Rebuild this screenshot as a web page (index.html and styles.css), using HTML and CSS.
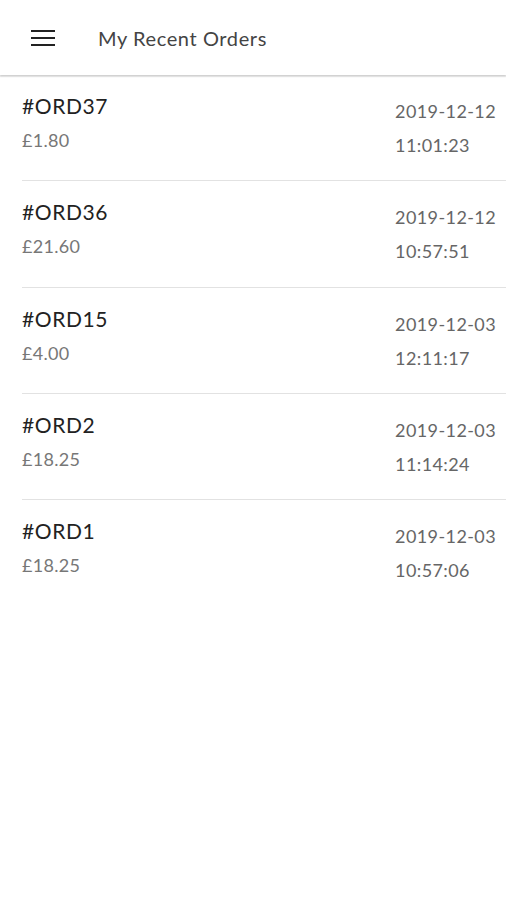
FILE: index.html
```html
<!DOCTYPE html>
<html>
<head>
<meta charset="utf-8">
<link rel="stylesheet" href="styles.css">
</head>
<body>
<header class="toolbar">
  <button class="menu" aria-label="menu">
    <svg width="24" height="16" viewBox="0 0 24 16"><path d="M0 1H24M0 8H24M0 15H24" stroke="#222" stroke-width="2.2"/></svg>
  </button>
  <h1 class="title">My Recent Orders</h1>
</header>
<ul class="list">
  <li class="item"><div class="inner"><div class="info"><div class="code">#ORD37</div><div class="price">£1.80</div></div><div class="when"><div>2019-12-12</div><div>11:01:23</div></div></div></li>
  <li class="item"><div class="inner"><div class="info"><div class="code">#ORD36</div><div class="price">£21.60</div></div><div class="when"><div>2019-12-12</div><div>10:57:51</div></div></div></li>
  <li class="item"><div class="inner"><div class="info"><div class="code">#ORD15</div><div class="price">£4.00</div></div><div class="when"><div>2019-12-03</div><div>12:11:17</div></div></div></li>
  <li class="item"><div class="inner"><div class="info"><div class="code">#ORD2</div><div class="price">£18.25</div></div><div class="when"><div>2019-12-03</div><div>11:14:24</div></div></div></li>
  <li class="item"><div class="inner"><div class="info"><div class="code">#ORD1</div><div class="price">£18.25</div></div><div class="when"><div>2019-12-03</div><div>10:57:06</div></div></div></li>
</ul>
</body>
</html>
```
FILE: styles.css
```css
* { box-sizing: border-box; }
body {
  margin: 0;
  font-family: "Lato", "Open Sans", sans-serif;
  background: #fff;
  color: #222;
}
.toolbar {
  height: 75px;
  display: flex;
  align-items: center;
  padding-left: 31px;
  box-shadow: 0 1px 2px rgba(0,0,0,0.18), 0 2px 1px rgba(0,0,0,0.06);
  position: relative;
  z-index: 1;
}
.menu {
  border: 0;
  background: none;
  padding: 0;
  width: 25px;
  height: 16px;
  display: flex;
}
.title {
  margin: 0 0 0 42px;
  font-size: 20px;
  font-weight: 400;
  color: #444;
  letter-spacing: 0.6px;
}
.list {
  list-style: none;
  margin: 0;
  padding: 0;
}
.item {
  padding-left: 22px;
}
.inner {
  height: 106.33px;
  display: flex;
  justify-content: space-between;
  border-bottom: 1px solid #e2e2e2;
  padding-right: 10px;
}
.item:last-child .inner { border-bottom: 0; }
.info { padding-top: 18px; }
.code {
  font-size: 21px;
  color: #222;
  line-height: 26px;
  letter-spacing: 0.6px;
}
.price {
  font-size: 18px;
  color: #777;
  line-height: 24px;
  margin-top: 9px;
  letter-spacing: 0.3px;
}
.when {
  padding-top: 25px;
  font-size: 18px;
  color: #666;
  letter-spacing: 0.4px;
}
.when div { line-height: 22px; }
.when div:first-child { margin-bottom: 12px; }
```
